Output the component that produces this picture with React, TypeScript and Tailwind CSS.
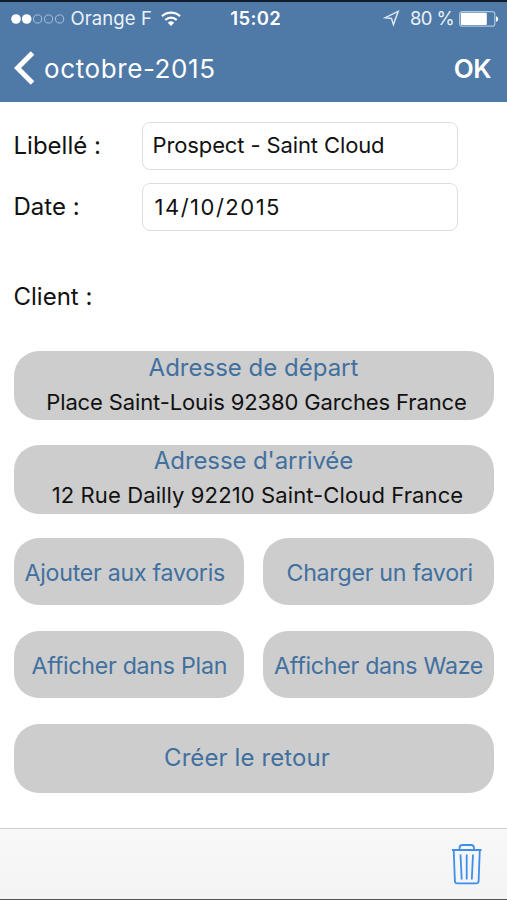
import React from "react";

type PillProps = {
  children: React.ReactNode;
  className?: string;
};

const Pill: React.FC<PillProps> = ({ children, className = "" }) => (
  <button
    className={`flex items-center rounded-[25px] bg-[#cdcdcd] text-[#41709f] leading-7 whitespace-nowrap ${className}`}
  >
    {children}
  </button>
);

const StatusBar: React.FC = () => (
  <div className="flex items-center h-[33px] text-[18.5px] leading-none text-[#eaf2fa]">
    <div className="flex items-center flex-1 pl-[10.5px]">
      {/* Signal strength */}
      <svg width="54" height="12" viewBox="0 0 54 12" fill="none">
        <circle cx="5" cy="6" r="4.8" fill="#fff" />
        <circle cx="15.7" cy="6" r="4.8" fill="#fff" />
        <circle cx="26.6" cy="6" r="4.1" stroke="#a9c2dc" />
        <circle cx="37.6" cy="6" r="4.1" stroke="#a9c2dc" />
        <circle cx="48.6" cy="6" r="4.1" stroke="#a9c2dc" />
      </svg>
      <span className="ml-[6px] tracking-[0.1px]">Orange F</span>
      <svg className="ml-[9px]" width="20" height="16" viewBox="0 0 20 16" fill="none">
        <path d="M1 5.2a13 13 0 0 1 18 0" stroke="#fff" strokeWidth="2.2" />
        <path d="M4.3 9a8.2 8.2 0 0 1 11.4 0" stroke="#fff" strokeWidth="2.2" />
        <path d="M6.8 11.7a4.7 4.7 0 0 1 6.4 0L10 15z" fill="#fff" />
      </svg>
    </div>
    <span className="pl-[2px] font-semibold tracking-[0.4px] text-white">15:02</span>
    <div className="flex items-center justify-end flex-1 pr-[8px]">
      <svg width="17" height="17" viewBox="0 0 17 17" fill="none">
        <path d="M15.2 1.4 2.200 7.700l6.300.7 1.900 6.200z" stroke="#dce8f4" strokeWidth="1.5" />
      </svg>
      <span className="ml-[10px] tracking-[-0.6px]">80 %</span>
      <svg className="ml-[5px]" width="40" height="16" viewBox="0 0 40 16" fill="none">
        <rect x="0.6" y="0.6" width="35.2" height="14.6" rx="2.5" stroke="#a9c6e0" strokeWidth="1.2" />
        <rect x="1.8" y="1.8" width="26" height="12.2" rx="1" fill="#fff" />
        <path d="M37 5.2c3 .6 3 5 0 5.6z" fill="#fff" />
      </svg>
    </div>
  </div>
);

const App: React.FC = () => {
  return (
    <div className="flex flex-col w-[507px] h-[900px] overflow-hidden bg-white text-[#111] font-['Inter',sans-serif]">
      <header className="h-[102px] shrink-0 bg-[#4f79a6] border-t-2 border-[#101c2b]">
        <StatusBar />
        <div className="flex items-center justify-between h-[66px] pl-[14px] pr-[16px] text-white">
          <div className="flex items-center">
            <svg width="22" height="34" viewBox="0 0 22 34" fill="none">
              <path d="M18.5 2 3.5 17l15 15" stroke="#fff" strokeWidth="5" />
            </svg>
            <span className="ml-[8px] text-[26px] tracking-[0.6px]">octobre-2015</span>
          </div>
          <span className="text-[26px] font-semibold tracking-[-0.5px]">OK</span>
        </div>
      </header>

      <main className="flex-1 px-[13.5px] pt-5">
        <div className="flex items-center h-[48px]">
          <label className="w-[128px] pb-[1px] text-[24px]">Libellé :</label>
          <div className="flex items-center w-[316.5px] h-[48px] pl-[10px] pb-[2px] text-[22px] tracking-[-0.12px] rounded-lg border border-[#dedede] whitespace-nowrap">
            Prospect - Saint Cloud
          </div>
        </div>
        <div className="flex items-center h-[48px] mt-[13px]">
          <label className="w-[128px] text-[24px]">Date :</label>
          <div className="flex items-center w-[316.5px] h-[48px] pl-[12px] text-[22px] tracking-[1.5px] rounded-lg border border-[#dedede] whitespace-nowrap">
            14/10/2015
          </div>
        </div>
        <div className="flex items-center h-[48px] mt-[42px] text-[24px]">Client :</div>

        <Pill className="flex-col w-full h-[69px] mt-[30px] pt-[3px]">
          <span className="text-[24px]">Adresse de départ</span>
          <span className="mt-[6px] pl-[6px] text-[22px] tracking-[-0.13px] text-[#111]">
            Place Saint-Louis 92380 Garches France
          </span>
        </Pill>
        <Pill className="flex-col w-full h-[69px] mt-[24.5px] pt-[2px]">
          <span className="text-[24px] tracking-[-0.1px]">Adresse d'arrivée</span>
          <span className="mt-[6px] pl-[8px] text-[22px] tracking-[0.11px] text-[#111]">
            12 Rue Dailly 92210 Saint-Cloud France
          </span>
        </Pill>

        <div className="grid grid-cols-2 gap-x-[19px] gap-y-[25.5px] mt-[24px] text-[23.2px] tracking-[-0.27px]">
          <Pill className="h-[67.5px] pl-[11px] pt-[3px]">Ajouter aux favoris</Pill>
          <Pill className="h-[67.5px] pl-[23.5px] pt-[3px]">Charger un favori</Pill>
          <Pill className="h-[67.5px] pl-[18px] pt-[3px]">Afficher dans Plan</Pill>
          <Pill className="h-[67.5px] pl-[11px] pt-[3px]">Afficher dans Waze</Pill>
        </div>

        <Pill className="w-full h-[69.5px] mt-[25.5px] pl-[150.5px] text-[24px] tracking-[0.1px]">Créer le retour</Pill>
      </main>

      <footer className="flex items-center justify-end h-[72px] pr-[24px] shrink-0 bg-gradient-to-b from-[#f8f8f8] to-[#f4f4f4] border-t border-t-[#cfcfcf] border-b border-b-[#555]">
        {/* Trash */}
        <svg width="32" height="42" viewBox="0 0 32 42" fill="none" stroke="#3e8fec" strokeWidth="1.8">
          <path d="M1 7h29.500" strokeWidth="2" />
          <path d="M8.500 6.500V5a3 3 0 0 1 3-3h8.500a3 3 0 0 1 3 3v1.500" />
          <path d="M2.700 7l1.200 31a2.500 2.500 0 0 0 2.500 2.400h18.700a2.500 2.500 0 0 0 2.500-2.400L28.800 7" />
          <path d="M9.500 11.500 10.700 36.500M15.700 11.500v25M22 11.500 20.800 36.500" />
        </svg>
      </footer>
    </div>
  );
};

export default App;
